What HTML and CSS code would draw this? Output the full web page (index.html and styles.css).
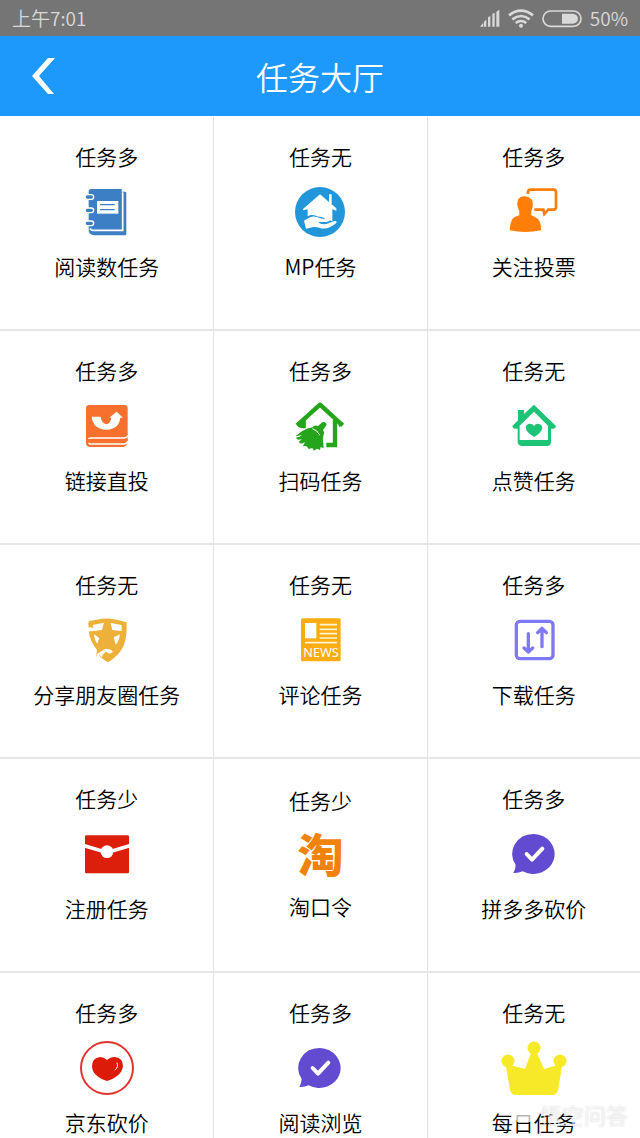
FILE: index.html
```html
<!DOCTYPE html>
<html lang="zh-CN">
<head>
<meta charset="utf-8">
<meta name="viewport" content="width=device-width, initial-scale=1">
<title>任务大厅</title>
<link rel="stylesheet" href="styles.css">
</head>
<body>
<div class="status-bar">
  <span>上午7:01</span>
  <div class="status-icons">
    <svg class="signal" viewBox="123 24 60 54" aria-hidden="true"><path fill="currentColor" d="M123 77l10-12v12zM135 77V62l7-6v21zM147 77V49l7-4v32zM160 77V39l7-4v42zM172 77V32l9-6v51z"/></svg>
    <svg class="wifi" viewBox="207 24 78 57" aria-hidden="true"><g fill="none" stroke="currentColor" stroke-width="8"><path d="M210 43q36-28 72 0"/><path d="M220 55q26-20 52 0"/><path d="M230 66q16-12 32 0"/></g><circle cx="246" cy="74" r="6" fill="currentColor"/></svg>
    <svg class="battery" viewBox="309 24 120 57" aria-hidden="true"><rect x="312" y="30" width="114" height="46" rx="23" fill="none" stroke="currentColor" stroke-width="5"/><path fill="currentColor" d="M369 38h33q15 3 15 15t-15 15h-33z"/></svg>
    <span>50%</span>
  </div>
</div>
<header class="title-bar">
  <button class="back" type="button" aria-label="返回"><svg viewBox="0 0 24 38" aria-hidden="true"><path fill="#fff" d="M16 1h7L7 19l15 18h-6L0 19z"/></svg></button>
  <h1 class="title">任务大厅</h1>
</header>
<main class="task-grid">
  <a class="task" href="#read"><span class="supply">任务多</span>
    <svg class="icon" viewBox="117 135 162 162" aria-hidden="true"><path fill="#3d7fc4" d="M150 147h92v8h10q4 0 4 4v122q0 5-5 5h-93q-16-2-15-18V155q0-8 7-8z"/><path fill="none" stroke="#fff" stroke-width="5" d="M245 157v114h-89q-8 0-8-6"/><path fill="#fff" d="M168 183h64v38h-64z"/><path stroke="#3d7fc4" stroke-width="4" d="M177 194h44M177 209h44"/><g fill="#3d7fc4" stroke="#fff" stroke-width="4"><rect x="132" y="164" width="26" height="14" rx="7"/><rect x="132" y="204" width="26" height="14" rx="7"/><rect x="132" y="243" width="26" height="14" rx="7"/></g></svg>
    <span>阅读数任务</span></a>
  <a class="task" href="#mp"><span class="supply">任务无</span>
    <svg class="icon" viewBox="99 135 162 162" aria-hidden="true"><circle cx="180" cy="216" r="75" fill="#2196d9"/><path fill="#fff" d="M180 163l27 23v-23h8v30l14 12v8l-12-6v37q-8-5-20-5-4-8-13-8-12 0-21-5-11-3-20 3v-21l-14 3v-4z"/><path fill="#fff" d="M132 242l12-7q13-9 28-3 13 6 28 5 9 0 9 5-5 5-27 4-10-1-3 4 14 6 28-1l17-6q8 0 5 6-26 22-49 15-17-6-29-1l-13 3z"/></svg>
    <span>MP任务</span></a>
  <a class="task" href="#vote"><span class="supply">任务多</span>
    <svg class="icon" viewBox="81 135 162 162" aria-hidden="true"><g fill="#ff7e08"><path d="M134 169q12 0 22 10 6 16-2 35v12q15 6 21 12 8 10 8 33-46 10-94 0 2-27 10-36 7-6 19-9v-13q-10-17-4-34 7-10 20-10z"/><path fill="none" stroke="#ff7e08" stroke-width="8" d="M144 162v-5q0-8 8-8h68q8 0 8 8v45q0 7-8 7h-15l-12 13-3-13h-27"/></g></svg>
    <span>关注投票</span></a>

  <a class="task" href="#link"><span class="supply">任务多</span>
    <svg class="icon" viewBox="87 27 162 162" aria-hidden="true"><path fill="#f7702e" d="M115 45h105q10 0 10 10v76l2 6q-4 7-1 13v8q-4 10-13 13H116q-11-2-11-13V55q0-10 10-10z"/><path stroke="#fff" stroke-width="5" fill="none" d="M232 136q-5 8-14 8h-98q-7 0-7 3M232 153q-5 9-14 9h-96q-8 0-8-4"/><path fill="#fff" d="M122 80h27q3 20 18 23 12-5 14-20h-6l22-18 19 18h-8q-4 34-41 36-41-1-45-39z"/></svg>
    <span>链接直投</span></a>
  <a class="task" href="#scan"><span class="supply">任务多</span>
    <svg class="icon" viewBox="729 27 162 162" aria-hidden="true"><path fill="none" stroke="#25a51b" stroke-width="13" stroke-linejoin="round" d="M741 106l69-62 68 62"/><path fill="none" stroke="#25a51b" stroke-width="13" d="M761 91v24M855 89v76h-26"/><path fill="#25a51b" d="M741 99h15v16l-11-4zM862 96h17l-11 16z"/><path fill="#25a51b" d="M738 137l20-15q17-9 30-10 5-8 16-4l13-11q6-3 11 3 4 3 0 7l-9 13q6 9 1 17-3 14 0 24l1 14-9-4-2 9-9-4-9 6-5-8-11 3-6-8-11-1 6-11-12 4-7-5 9-8-11 1-7-6q13-2 20-9l-18 5z"/><path fill="none" stroke="#fff" stroke-width="3" d="M787 116q15 4 22 19"/></svg>
    <span>扫码任务</span></a>
  <a class="task" href="#like"><span class="supply">任务无</span>
    <svg class="icon" viewBox="81 27 162 162" aria-hidden="true"><g fill="#1dc477"><path d="M162 44l66 64q0 7-7 8h-8v42q-1 8-9 10h-80q-9-2-11-10v-42h-9q-7-2-7-8l17-17V60h18v12z"/><path fill="#fff" d="M162 65l42 42v43h-85v-43z"/><path d="M162 141q-25-15-25-29 2-11 13-11 8 0 12 7 5-7 12-7 12 1 13 12-2 15-25 28z"/></g></svg>
    <span>点赞任务</span></a>

  <a class="task" href="#share"><span class="supply">任务无</span>
    <svg class="icon" viewBox="87 24 162 162" aria-hidden="true"><path fill="#edb139" d="M112 53l3-5 22-4q34-8 66 2l24 6q2 61-18 86-17 22-38 34-19-10-27-22l18-16 9 6 10-3-14-6-32 22 3-18q-21-25-25-56l14-2-14-9z"/><path fill="#fff" d="M125 60l34-7-6 22-25 3-16 1 2-13 14 3zM179 54l33 6v18l-28-3zM129 88l16 11-6 17q-8-8-10-28zM207 88q-3 22-13 31l-6-22z"/><path fill="#fff" d="M134 149l29-18 17 3 6 7-11 5-10-6-10 9-2 8-9-8z"/></svg>
    <span>分享朋友圈任务</span></a>
  <a class="task" href="#comment"><span class="supply">任务无</span>
    <svg class="icon" viewBox="729 24 162 162" aria-hidden="true"><rect x="753" y="40" width="119" height="129" rx="5" fill="#ffac13"/><path fill="#fff" d="M765 54h34v46h-34z"/><path stroke="#fff3cf" stroke-width="5" d="M809 59h52M809 73h52M809 86h52M809 99h52M765 113h96"/><text class="news" x="813" y="156" text-anchor="middle">NEWS</text></svg>
    <span>评论任务</span></a>
  <a class="task" href="#download"><span class="supply">任务多</span>
    <svg class="icon" viewBox="81 24 162 162" aria-hidden="true"><g fill="none" stroke="#8178f5" stroke-width="10" stroke-linecap="round" stroke-linejoin="round"><rect x="109" y="49" width="110" height="112" rx="11"/><path d="M145 86v54M132 129l13 12 13-12M186 125V73M173 83l13-13 13 13"/></g></svg>
    <span>下载任务</span></a>

  <a class="task" href="#register"><span class="supply">任务少</span>
    <svg class="icon" viewBox="87 22 162 162" aria-hidden="true"><rect x="102" y="47" width="132" height="114" rx="4" fill="#dc1f0b"/><path fill="none" stroke="#fff" stroke-width="11" d="M100 78l50 15h36l50-15"/><circle cx="168" cy="96" r="19" fill="#fff"/></svg>
    <span>注册任务</span></a>
  <a class="task" href="#taobao"><span class="supply">任务少</span>
    <span class="taobao" aria-hidden="true">淘</span>
    <span>淘口令</span></a>
  <a class="task" href="#pdd"><span class="supply">任务多</span>
    <svg class="icon" viewBox="81 22 162 162" aria-hidden="true"><path fill="#624bd1" d="M162 43a64 60 0 1 1-34 112q-13 6-28 5 7-11 7-24A64 60 0 0 1 162 43z"/><path fill="none" stroke="#fff" stroke-width="12" stroke-linecap="round" stroke-linejoin="round" d="M140 103l16 17 31-33"/></svg>
    <span>拼多多砍价</span></a>

  <a class="task" href="#jd"><span class="supply">任务多</span>
    <svg class="icon" viewBox="79 1042 54 54" aria-hidden="true"><circle cx="106" cy="1069" r="26" fill="none" stroke="#e0352d" stroke-width="2"/><path fill="#dc1b08" d="M106 1061q3-3 8-3 8 1 8 9-1 10-16 15-15-5-15-15 0-8 8-9 4 0 7 3z"/><path fill="none" stroke="#fff" stroke-width="1" stroke-linecap="round" d="M116 1064q2 4-2 7"/></svg>
    <span>京东砍价</span></a>
  <a class="task" href="#browse"><span class="supply">任务多</span>
    <svg class="icon" viewBox="81 22 162 162" aria-hidden="true"><path fill="#624bd1" d="M162 43a64 60 0 1 1-34 112q-13 6-28 5 7-11 7-24A64 60 0 0 1 162 43z"/><path fill="none" stroke="#fff" stroke-width="12" stroke-linecap="round" stroke-linejoin="round" d="M140 103l16 17 31-33"/></svg>
    <span>阅读浏览</span></a>
  <a class="task" href="#daily"><span class="supply">任务无</span>
    <svg class="icon crown" viewBox="501 1042 66 54" aria-hidden="true"><g fill="#f5e928"><circle cx="534" cy="1049" r="6.5"/><circle cx="508" cy="1062" r="6.5"/><circle cx="560" cy="1062" r="6.5"/><path d="M531 1054h6l7 16 14-4 4 1-4 24q-1 5-6 5h-36q-5 0-6-5l-4-24 4-1 15 4z"/></g></svg>
    <span>每日任务</span></a>
</main>
<div class="watermark"><svg viewBox="0 0 24 24" aria-hidden="true"><path fill="currentColor" d="M12 3l4 3h6v6l-3 8H5l-3-8V6h6z"/></svg><span>悟空问答</span></div>
</body>
</html>
```

FILE: styles.css
```css
* { box-sizing: border-box; }

body {
  margin: 0;
  height: 100vh;
  display: flex;
  flex-direction: column;
  overflow: hidden;
  background: #fff;
  color: #000;
  font-family: "Noto Sans CJK SC", sans-serif;
  font-weight: 350;
}

svg { display: block; }

.status-bar {
  flex: none;
  height: 36px;
  padding: 0 12px;
  display: flex;
  align-items: center;
  justify-content: space-between;
  background: #757575;
  color: #d9d9d9;
  font-size: 19px;
  line-height: 36px;
}

.status-icons {
  display: flex;
  align-items: center;
  gap: 8px;
}

.signal { width: 20px; height: 18px; }
.wifi { width: 26px; height: 19px; }
.battery { width: 40px; height: 19px; }

.title-bar {
  flex: none;
  height: 80px;
  padding: 0 16px;
  display: grid;
  grid-template-columns: 56px 1fr 56px;
  align-items: center;
  background: #1d99fb;
  color: #fff;
}

.back {
  height: 56px;
  padding: 0 16px;
  border: 0;
  background: none;
}

.back svg { width: 24px; height: 38px; }

.title {
  margin: 0;
  font-size: 32px;
  line-height: 48px;
  font-weight: 350;
  text-align: center;
}

.task-grid {
  flex: 1;
  min-height: 0;
  padding-top: 1px;
  overflow-y: auto;
  scrollbar-width: none;
  display: grid;
  grid-template-columns: repeat(3, 1fr);
  grid-auto-rows: 214px;
}

.task {
  padding-bottom: 24px;
  display: flex;
  flex-direction: column;
  align-items: center;
  justify-content: center;
  gap: 12px;
  border-left: 1px solid #e2e2e2;
  border-bottom: 2px solid #e6e6e6;
  color: inherit;
  font-size: 21px;
  line-height: 30px;
  text-decoration: none;
}

.task:nth-child(3n + 1) { border-left: 0; }

.supply { margin-bottom: 2px; }

.icon { width: 54px; height: 54px; }
.crown { width: 66px; }

.news {
  fill: #fff;
  font-family: "Noto Sans", sans-serif;
  font-size: 38px;
  font-weight: 400;
}

.taobao {
  height: 50px;
  color: #f0830c;
  font-size: 46px;
  line-height: 46px;
  font-weight: 900;
}

.watermark {
  position: absolute;
  right: 12px;
  bottom: 8px;
  display: flex;
  align-items: center;
  gap: 4px;
  color: rgba(255, 255, 255, 0.7);
  font-size: 22px;
  line-height: 32px;
  text-shadow: 0 0 2px rgba(0, 0, 0, 0.2);
  pointer-events: none;
}

.watermark svg { width: 24px; height: 24px; }
```
